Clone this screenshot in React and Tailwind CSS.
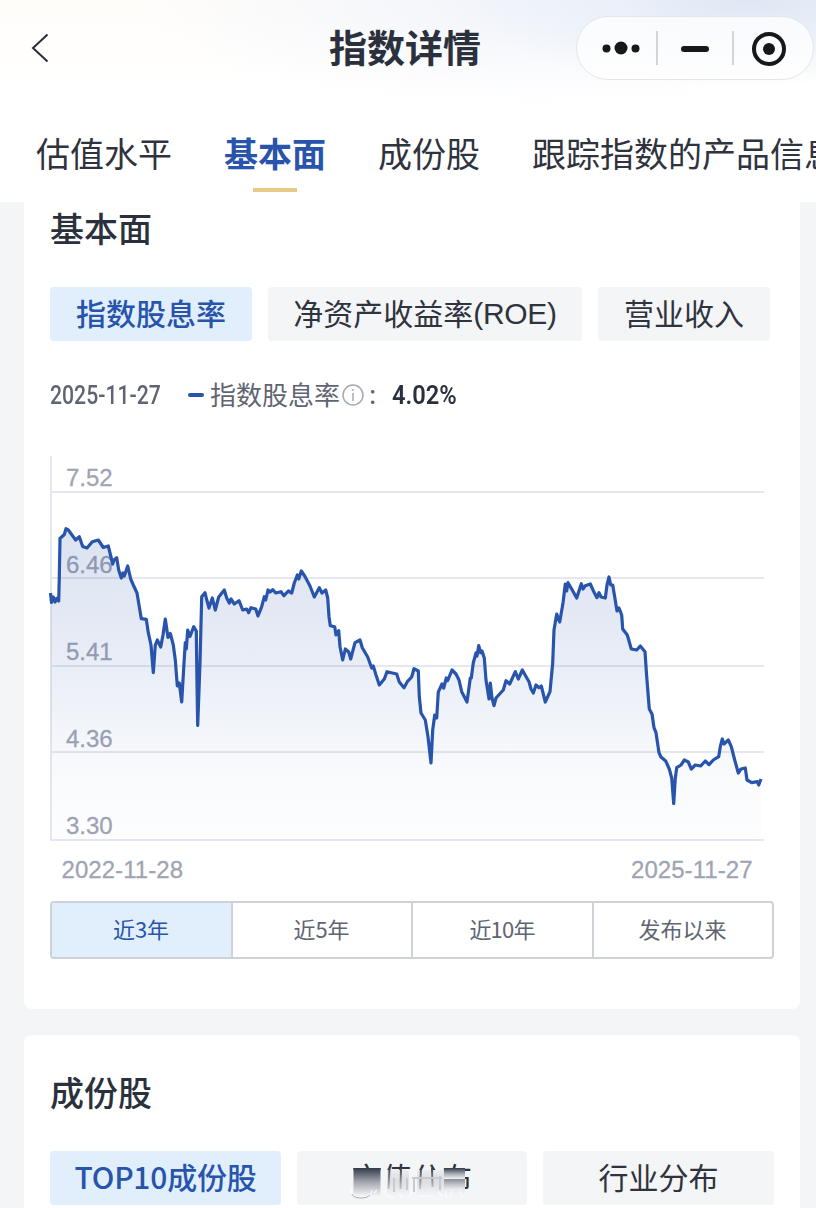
import React from "react";

const TABS = ["估值水平", "基本面", "成份股", "跟踪指数的产品信息"];
const RANGES = ["近3年", "近5年", "近10年", "发布以来"];

const GRID = [
  { y: 492, base: 485.5, label: "7.52" },
  { y: 578, base: 572.5, label: "6.46" },
  { y: 666, base: 659.5, label: "5.41" },
  { y: 752, base: 746.5, label: "4.36" },
  { y: 840, base: 833.5, label: "3.30" },
];

const POINTS =
  "50.5,593 51.5,602.5 53.3,597 55,602 56.7,598.5 58.7,601 59.3,577 60,538.5 64.3,534.5 66,528.7 68.3,530 72.7,536 75.7,540 79.3,536.7 82.7,546.5 87,548 92.3,541.7 98.3,540 103.3,547.5 108.3,546 112.7,564 114,560 116.7,557.7 118.7,570 121.3,578 123,573 124.3,576 127.7,566 130.7,579 133.3,585 137,593 139,605 141.3,618.7 146.3,619.3 148.3,632.7 151,645 153.3,672.7 155.3,645 157.3,640 160.7,647 163,635 165.3,619 168,637.5 170.3,633.5 173.3,645 175.3,660 177.3,686 179.3,683 181.7,702 184,663 185.3,642.7 186.3,649 187.7,630 190,636.5 193.7,626.7 196.3,631 197,683 197.7,725.5 200,663 201.7,596.7 205,592.7 206.5,599 209,608 212.3,598 215.3,610 218.7,597 224.3,590 226.7,598 229.3,603 231,599 234.3,604 239,600.7 242.7,610 246.7,609 248.7,612.7 251,607.7 255.7,609 258,616 261.7,606.7 264.3,596.7 265.7,600 268,590 270,592 272.7,589.7 275.7,593 281,591.7 284,595.7 288.3,591 291.7,593 294.3,583 297.3,575 298.7,579 301.3,571 304.7,576 310,586 314.3,597 319.3,587.7 322,593 325.7,590 327.7,598 329,616.7 330.3,625.7 334.7,626.7 336,635 338.7,630.7 340,646.7 342.7,660 345.3,649 348.7,652 350.7,659 355,642.7 360,640 362.3,647.7 367.7,657 371.7,668 373.3,666 376,675 379.3,685 384.3,679 387,671.7 396.7,674 399.3,682 404,687.7 407.3,681.7 411.7,677 414,668.7 418.3,671 419.3,696.7 421,713 425.3,720 428,736.7 431,763 432.7,730 434.7,715 436.7,718 438.3,692 442,684 443.7,688 446.3,678 447.7,680.5 452,670 456,674 459,680 461.7,691.7 467,702 470.3,678 471.3,678 473.3,662.7 476,653 477,656 478.7,645.7 480.7,652.7 482,651 484.3,658 486,680 489,699 490.3,683 492,698 494,705.7 496,698 503.3,690 506,680.7 509.7,684 515.3,671.7 518.3,679 522.3,670 529,681.7 531,689 533.3,693 536,685 539,687.7 541.3,686 545.3,702 550,691.7 552.7,663 554,630 556.7,614 559.7,622 563,603 565.3,584 566.7,591 568,582.7 571.7,589 576.7,598 581.3,583.7 583,589 585.3,585.7 590.3,584 593.3,590.7 597,597.7 599,592.7 601,597 605.3,598 607,585 609,577 610.7,585 612.7,585 614.7,596.7 617,611 619,608 621.7,615 622.7,629 627.3,635 631.3,649 636.7,650 640.3,646 645,651.7 646.7,676.7 649.3,709 652,714 654,727.7 656,732.7 659,752.7 660.7,756.7 665.7,761 669.3,769 671.7,778 673.7,803.7 675.3,778 676.7,767.7 681,765 684.3,760 688.3,762 691.3,769 695.3,765 700.7,766 705.3,761 709,764.7 713.3,760 718.7,756.7 720.3,746.7 722.3,739 724,744 728.3,740 731.3,746.7 734.7,760 738.3,773 741,769 745.3,768 747,780 751.7,782.7 757.3,781.7 758.7,785 761,779";

function Header() {
  return (
    <header className="h-[202px] bg-white bg-[radial-gradient(ellipse_300px_85px_at_92%_0%,#dfe7f4_0%,#ebf0f9_45%,#ffffff00_100%),radial-gradient(ellipse_400px_105px_at_66%_0%,#f1f4fb_0%,#ffffff00_100%),linear-gradient(180deg,#fffdfa_0px,#ffffff_90px)]">
      <div className="flex h-24 items-center pr-[2px] pl-[30px]">
        <svg width="20" height="32" viewBox="0 0 20 32" className="shrink-0" fill="none" stroke="#2a2d35" strokeWidth="2">
          <path d="M17.500 2.500 3 16l14.500 13.500" />
        </svg>
        <h1 className="ml-[279px] w-[152px] shrink-0 pb-1 text-[38px] leading-none font-bold whitespace-nowrap text-[#2b303d]">指数详情</h1>
        <div className="ml-auto flex h-16 w-[238px] shrink-0 items-center rounded-full border border-[#e4e6ea] bg-white/75">
          <svg width="236" height="62" viewBox="0 0 236 62" fill="#17181a">
            <circle cx="29.500" cy="31.500" r="4" />
            <circle cx="44" cy="31" r="6.500" />
            <circle cx="58.500" cy="31.500" r="4" />
            <path d="M80 14v34M156 14v34" stroke="#d3d5d9" strokeWidth="2" />
            <rect x="104" y="29" width="28" height="6" rx="3" />
            <circle cx="192" cy="32" r="15" fill="none" stroke="#17181a" strokeWidth="4" />
            <circle cx="192" cy="32" r="6" />
          </svg>
        </div>
      </div>
      <nav className="flex h-[106px] gap-[52px] overflow-hidden pl-9 text-[34px] leading-[50px] whitespace-nowrap text-[#2f333e]">
        {TABS.map((tab, i) =>
          i === 1 ? (
            <div key={tab} className="flex shrink-0 flex-col items-center pt-[32px] font-bold text-[#2854ab]">
              <span>{tab}</span>
              <span className="mt-[10px] h-1 w-11 bg-[#e8c988]" />
            </div>
          ) : (
            <div key={tab} className="shrink-0 pt-[32px]">{tab}</div>
          ),
        )}
      </nav>
    </header>
  );
}

function Pill({ className, active, children }) {
  return (
    <div
      className={
        "flex h-[54px] shrink-0 items-center justify-center rounded-[4px] pb-1 text-[30px] leading-none whitespace-nowrap " +
        (active ? "bg-[#e1effd] font-medium text-[#2854ab] " : "bg-[#f4f5f7] text-[#2f333e] ") +
        className
      }
    >
      {children}
    </div>
  );
}

function Legend() {
  return (
    <div className="mt-[34px] flex h-10 items-center whitespace-nowrap text-[#5f6472]">
      <span className="w-[138px] shrink-0">
        <span className="inline-block origin-left scale-x-[0.815] font-[Roboto] text-[26px] font-medium">2025-11-27</span>
      </span>
      <span className="h-1 w-4 shrink-0 rounded-full bg-[#2854ab]" />
      <span className="ml-[6px] shrink-0 pb-[3px] text-[26px] leading-9">指数股息率</span>
      <svg width="22" height="22" viewBox="0 0 22 22" className="ml-[2px] shrink-0" fill="none" stroke="#a5a9b5" strokeWidth="1.500">
        <circle cx="11" cy="11" r="10" />
        <path d="M11 9v8M11 5v2" />
      </svg>
      <span className="w-7 shrink-0 pb-1 pl-[5px] text-[26px] leading-9">:</span>
      <span className="inline-block origin-left scale-x-[0.91] font-[Roboto] text-[26px] font-semibold text-[#2b303d]">4.02%</span>
    </div>
  );
}

function YieldChart() {
  return (
    <svg width="724" height="440" viewBox="50 450 724 440" className="mt-[35px] block overflow-visible">
      <defs>
        <linearGradient id="area" x1="0" y1="528" x2="0" y2="840" gradientUnits="userSpaceOnUse">
          <stop offset="0" stopColor="#2854ab" stopOpacity="0.170" />
          <stop offset="0.450" stopColor="#2854ab" stopOpacity="0.100" />
          <stop offset="0.800" stopColor="#2854ab" stopOpacity="0.025" />
          <stop offset="1" stopColor="#2854ab" stopOpacity="0.010" />
        </linearGradient>
      </defs>
      {GRID.map((g) => (
        <line key={g.y} x1="51" x2="764" y1={g.y} y2={g.y} stroke="#e6e8f0" strokeWidth="2" />
      ))}
      <line x1="51" x2="51" y1="456" y2="841" stroke="#e6e8f0" strokeWidth="2" />
      <g fontFamily="'Liberation Sans', Arial, sans-serif" fontSize="24" fill="#9fa4b3" stroke="#9fa4b3" strokeWidth="0.300">
        {GRID.map((g) => (
          <text key={g.y} x="66" y={g.base}>{g.label}</text>
        ))}
        <text x="61.500" y="878" textLength="121.500">2022-11-28</text>
        <text x="631" y="878" textLength="121.500">2025-11-27</text>
      </g>
      <polygon points={`51,840 ${POINTS} 761,840`} fill="url(#area)" />
      <polyline points={POINTS} fill="none" stroke="#2854ab" strokeWidth="3.200" strokeLinejoin="round" />
    </svg>
  );
}

function RangePicker() {
  return (
    <div className="mt-[11px] grid h-[58px] w-[724px] grid-cols-[181px_180px_181px_178px] divide-x-2 divide-[#cfd1d8] overflow-hidden rounded-[4px] border-2 border-[#cfd1d8] text-[22px]">
      {RANGES.map((r, i) => (
        <div
          key={r}
          className={"flex items-center justify-center pr-px pb-[3px] " + (i === 0 ? "bg-[#e1effd] text-[#2854ab]" : "text-[#5f6472]") + (i === 2 ? " tracking-[-0.8px]" : "")}
        >
          {r}
        </div>
      ))}
    </div>
  );
}

function SmudgedLabel() {
  return (
    <span className="relative">
      市值分布
      <svg width="130" height="44" viewBox="348 1160 130 44" className="absolute -top-px -left-[4px]">
        <defs>
          <linearGradient id="dark" x1="0" y1="0" x2="0" y2="1">
            <stop offset="0" stopColor="#343a49" />
            <stop offset="0.500" stopColor="#a3a6ae" />
            <stop offset="1" stopColor="#f4f5f7" />
          </linearGradient>
          <linearGradient id="pale" x1="0" y1="0" x2="0" y2="1">
            <stop offset="0" stopColor="#d5d7dc" stopOpacity="0.300" />
            <stop offset="0.450" stopColor="#dcdee2" />
            <stop offset="1" stopColor="#f4f5f7" />
          </linearGradient>
          <linearGradient id="streak" x1="0" y1="1168" x2="0" y2="1194" gradientUnits="userSpaceOnUse">
            <stop offset="0" stopColor="#3a3f4c" />
            <stop offset="0.450" stopColor="#8b8e97" />
            <stop offset="1" stopColor="#e4e5e9" />
          </linearGradient>
          <filter id="soft"><feGaussianBlur stdDeviation="0.600" /></filter>
        </defs>
        <rect x="350" y="1170" width="114" height="28" fill="#f4f5f7" />
        <rect x="353.500" y="1168" width="27" height="28" fill="url(#dark)" />
        <rect x="387" y="1170" width="22" height="26" fill="url(#pale)" />
        <rect x="417" y="1170" width="48" height="26" fill="url(#pale)" />
        <rect x="444" y="1168" width="21" height="11" fill="url(#dark)" />
        <rect x="444" y="1179" width="21" height="11" fill="url(#dark)" opacity="0.500" />
        <g filter="url(#soft)" fill="none" stroke="url(#streak)" strokeWidth="2">
          <path d="M389.500 1168l-1 21M401 1168l-.5 21M421 1168l-1 21M432 1168l.5 19" />
        </g>
        <g filter="url(#soft)" fill="none" stroke="#c8cad0" strokeWidth="2">
          <path d="M394 1178v14M407 1178v12M414 1178v14M440 1176v14M412 1178h30" />
        </g>
        <g fill="none" stroke="#fff" strokeWidth="1.200" opacity="0.800">
          <path d="M352 1188c-4 5 2 9 9 9s11-3 11-7M374 1193l3-3M385 1190c-1 4 3 7 8 7M399 1194l3 3M412 1191l-3 6M419 1196h13M438 1192l5 4M446 1191v6M453 1190l-3 7M459 1191l4 6" />
        </g>
        <path d="M352 1194c1 3 5 4 9 4 4 0 7-1 9-3" fill="none" stroke="#85888f" strokeWidth="0.700" />
      </svg>
    </span>
  );
}

export default function App() {
  return (
    <div className="h-[1208px] w-[816px] overflow-hidden bg-[#f4f5f7] font-['Noto_Sans_CJK_SC',sans-serif]">
      <Header />
      <main className="flex flex-col gap-[26px] pr-4 pl-6">
        <section className="h-[807px] rounded-b-lg bg-white pt-px pl-[26px]">
          <h2 className="text-[34px] leading-[50px] font-medium text-[#2b303d]">基本面</h2>
          <div className="mt-[34px] flex gap-4">
            <Pill active className="w-[202px]">指数股息率</Pill>
            <Pill className="w-[314px]">
              净资产收益率<span className="pt-1 font-['Liberation_Sans',sans-serif] tracking-[-0.3px]">(ROE)</span>
            </Pill>
            <Pill className="w-[172px]">营业收入</Pill>
          </div>
          <Legend />
          <YieldChart />
          <RangePicker />
        </section>
        <section className="h-[260px] rounded-t-lg bg-white pt-8 pl-[26px]">
          <h2 className="text-[34px] leading-[50px] font-medium text-[#2b303d]">成份股</h2>
          <div className="mt-[34px] flex gap-4">
            <Pill active className="w-[231px] tracking-[-0.2px]">TOP10成份股</Pill>
            <Pill className="w-[230px]">
              <SmudgedLabel />
            </Pill>
            <Pill className="w-[231px]">行业分布</Pill>
          </div>
        </section>
      </main>
    </div>
  );
}
